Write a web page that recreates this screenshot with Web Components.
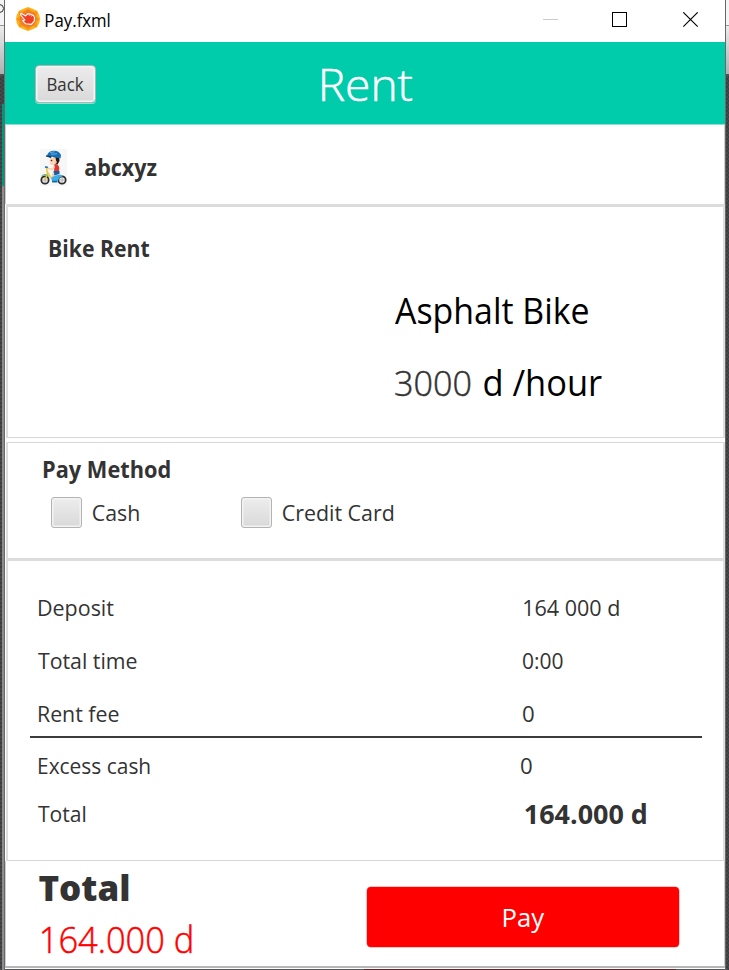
<!DOCTYPE html>
<html lang="en">
<head>
<meta charset="utf-8">
<title>Pay.fxml</title>
<style>
html,body{margin:0;height:100%;overflow:hidden;background:#48494a;font-family:"Open Sans","Noto Sans",sans-serif;color:#333}
</style>
</head>
<body>
<pay-page></pay-page>
<script>
const ctx = document.createElement('canvas').getContext('2d');

/* One line of text whose inked width is given by the "w" attribute. */
class FitText extends HTMLElement {
  connectedCallback() {
    const root = this.attachShadow({ mode: 'open' });
    const s = +this.getAttribute('size') || 22, wt = this.getAttribute('weight') || 400, w = +this.getAttribute('w');
    ctx.font = `${wt} ${s * 10}px "Open Sans"`;
    const m = ctx.measureText(this.textContent.trim());
    const left = m.actualBoundingBoxLeft / 10;
    const k = w / (left + m.actualBoundingBoxRight / 10);
    root.innerHTML = `<style>
      :host{display:block;flex:none;width:${w}px;height:${s}px;font-size:${s}px;font-weight:${wt};line-height:${s}px;white-space:nowrap;${wt == 300 ? '-webkit-text-stroke:.5px currentColor' : ''}}
      span{display:block;width:max-content;transform-origin:0 0;transform:translateX(${left * k}px) scaleX(${k})}
    </style><span><slot></slot></span>`;
  }
}
customElements.define('fit-text', FitText);

function define(name, html) {
  customElements.define(name, class extends HTMLElement {
    constructor() { super(); this.attachShadow({ mode: 'open' }).innerHTML = html; }
  });
}

define('app-icon', `<style>:host{display:block;width:24px;height:24px;flex:none}svg{display:block}</style>
<svg width="24" height="24" viewBox="0 0 24 24">
<path d="M12 0L16 1.6 21 3.7 23.3 8 24 12 23.3 16 21 20.3 16 22.4 12 24 8 22.4 3 20.3.7 16 0 12 .7 8 3 3.7 8 1.6Z" fill="#fbb517"/>
<path d="M12 1.2L17 4.5H21.5L20.5 9.5 23.5 12 20.5 15 21 19.5 16.5 19.5 12 23 7.5 19.5H3L3.5 15 .5 12 3.5 9.5 2.7 4.5H7Z" fill="#f69320"/>
<path d="M12 3L19 6.5 20.5 12 18 18 12 20.5 6 18 3.5 12 5 6.5Z" fill="#f47a24"/>
<path d="M5 6.3L9.600 9 11.500 6.800 12.800 6.700 14 7.300 15.200 7.200 16.300 8.200 17.400 8.400 18.500 10.500 18.200 14.200 15.300 17.400 9.800 16.800 6.600 13.700 8.900 13 4.600 8Z" fill="#ef3e24" stroke="#fff" stroke-width="1.100" stroke-linejoin="round"/>
<path d="M12.500 7L13.500 9M14.600 7.600L15.500 9.600" stroke="#fff" stroke-width=".5"/>
</svg>`);

define('window-buttons', `<style>:host{display:block;flex:none;width:156px;height:16px}svg{display:block}</style>
<svg width="156" height="16" viewBox="0 0 156 16" fill="none" shape-rendering="crispEdges">
<path d="M0 7.5H15" stroke="#ccc"/><rect x="69.500" y=".5" width="14" height="14" stroke="#000"/>
<path d="M140.300 .300L154.700 14.700M154.700 .300L140.300 14.700" stroke="#000" stroke-width="1.100" shape-rendering="auto"/></svg>`);

define('title-bar', `<style>:host{display:flex;height:42px;background:#fff;color:#000;box-sizing:border-box;padding:7px 26px 0 11px}
fit-text{margin:4.500px 0 0 6px}window-buttons{margin:5px 0 0 auto}</style>
<app-icon></app-icon><fit-text w="63.500" size="17.500">Pay.fxml</fit-text><window-buttons></window-buttons>`);

define('back-button', `<style>:host{display:flex;width:61px;height:38px;box-sizing:border-box;border:1.500px solid #aab6b2;border-radius:4px;padding:8.500px 0 0 12px;
background:linear-gradient(#ececec,#d9d9d9);box-shadow:inset 0 0 0 1.500px #f4f4f4,0 1px 0 #8ce4d2}</style><slot></slot>`);

define('rent-header', `<style>:host{display:flex;height:82px;background:#00cbaa;border-bottom:1px solid #8ce0d0;box-sizing:content-box}
back-button{margin:23px 0 0 30px}.title{color:#fff;margin:19px 0 0 226px}</style>
<back-button><fit-text w="35.500" size="18">Back</fit-text></back-button><fit-text class="title" w="90" size="45" weight="300">Rent</fit-text>`);

define('kid-avatar', `<style>:host{display:block;width:27px;height:37px;flex:none;background:#f7f7f7}svg{display:block}</style>
<svg width="27" height="37" viewBox="0 0 27 37">
<path d="M13 9Q20 6 19.500 12L17.500 15.500H14Z" fill="#2a1712"/>
<path d="M10 8.500H15.500L16.500 14 14 16H11.500Q9.500 15 9.700 12Z" fill="#fbd3b5"/><circle cx="11.500" cy="11.500" r=".8" fill="#43251b"/>
<path d="M15.500 11.500a1.200 1.500 0 0 1 0 3" fill="#f2b48e"/>
<path d="M7 6.500Q8 2.500 13 1.700 19 1.200 21 6L20.500 9.500 15.500 8.600 12 7.700 10 9Z" fill="#176fb8"/>
<path d="M10 3.800L14.500 2.800M11 5.200L17 4.700" stroke="#67aede" stroke-width="1.100"/><path d="M6 6.800L11 8" stroke="#173452" stroke-width="1.300"/>
<path d="M14.500 15.500Q18.500 14.500 19.300 19L19 22.500H14Z" fill="#e6332c"/>
<path d="M14.500 17.500L12 20.500 8 19.300" fill="none" stroke="#fad0ae" stroke-width="1.800"/>
<path d="M13.500 22H19.500V25L14 26.500Z" fill="#175da3"/><path d="M13.500 24L12 29" stroke="#fad0ae" stroke-width="2"/>
<g fill="#e9e9e9" stroke="#262626" stroke-width="1.700"><circle cx="5" cy="31" r="3.700"/><circle cx="22" cy="31" r="3.700"/></g>
<g fill="none" stroke="#888" stroke-width=".5"><path d="M1.500 31H8.500M5 27.500V34.500M18.500 31H25.500M22 27.500V34.500"/></g>
<path d="M5 31L7.500 25 6.500 18.500M7 22L11 29" fill="none" stroke="#edc730" stroke-width="1.500"/>
<path d="M5 17.800L8 18.500" stroke="#2377b5" stroke-width="1.700"/><path d="M1.500 27Q5 23.500 9 27.500" fill="none" stroke="#68b67c" stroke-width="1"/>
<path d="M11 29Q14 26 20 25.500L23 27 19 29 17.500 33.500H12.500Z" fill="#3eaee5"/><path d="M12 32.500H17" stroke="#1466a9" stroke-width="1.500"/>
</svg>`);

define('user-bar', `<style>:host{display:flex;height:79px;background:#fff;border-left:1px solid #ccc;border-right:1px solid #ccc;}
kid-avatar{margin:24px 0 0 34px}::slotted(fit-text){margin:32px 0 0 18px}</style>
<kid-avatar></kid-avatar><slot></slot>`);

define('bike-panel', `<style>:host{display:block;height:230px;box-sizing:content-box;background:#fff;border:2px solid #dedede;border-top:3px solid #dcdcdc;border-bottom:1px solid #d8d8d8;margin-left:1px}
h2{margin:0;padding:31px 0 0 41.500px}.detail{padding:32px 0 0 386.500px;color:#000}.price{display:flex;padding-top:36px;gap:13.500px}.num{color:#333;margin-left:.5px}</style>
<h2><fit-text w="99" size="22.500" weight="700">Bike Rent</fit-text></h2>
<div class="detail"><fit-text w="193" size="36">Asphalt Bike</fit-text><div class="price"><fit-text class="num" w="75" size="35.500" weight="300">3000</fit-text><fit-text w="118" size="36">d /hour</fit-text></div></div>`);

define('check-option', `<style>:host{display:flex;width:190.500px}i{width:29px;height:29px;border:1px solid #b3b3b3;border-radius:3px;background:linear-gradient(#ededed,#d9d9d9);box-shadow:inset 0 0 0 1.500px #f3f3f3;box-sizing:content-box;margin-right:11px}
::slotted(fit-text){margin-top:4px}</style><i></i><slot></slot>`);

define('method-panel', `<style>:host{display:block;height:115px;margin:4px 0 0 1px;background:#fff;border:2px solid #dedede;border-top:1px solid #d8d8d8;border-bottom:3px solid #dcdcdc}
h2{margin:0;padding:16px 0 0 35.500px}.opts{display:flex;padding:15.500px 0 0 42.500px}</style>
<h2><fit-text w="125.500" size="22.500" weight="700">Pay Method</fit-text></h2>
<div class="opts"><check-option><fit-text w="45.500" size="22">Cash</fit-text></check-option><check-option><fit-text w="110" size="22">Credit Card</fit-text></check-option></div>`);

define('fee-row', `<style>:host{display:grid;grid-template-columns:484px 1fr;height:22px;padding-left:30.500px}</style><slot></slot>`);

define('fee-panel', `<style>:host{display:flex;flex-direction:column;height:299px;margin-left:1px;background:#fff;border:2px solid #dedede;border-top:0;border-bottom:1px solid #d8d8d8}
.top{display:grid;gap:31px;padding-top:35px}.line{height:2px;background:#3c3c3f;margin:12px 21px 0 22px}.bottom{display:grid;gap:26px;padding-top:16px}.sum{margin:-1.500px 0 0 2px}.ex{margin-left:-1.500px}.dep{margin-left:1.500px}.t{margin-left:-1px}</style>
<div class="top"><fee-row><fit-text w="74.500">Deposit</fit-text><fit-text class="dep" w="94.500">164 000 d</fit-text></fee-row>
<fee-row><fit-text class="t" w="98.500">Total time</fit-text><fit-text w="39.500">0:00</fit-text></fee-row>
<fee-row><fit-text w="79.500">Rent fee</fit-text><fit-text w="10.500">0</fit-text></fee-row></div>
<div class="line"></div>
<div class="bottom"><fee-row><fit-text w="110.500">Excess cash</fit-text><fit-text class="ex" w="10.500">0</fit-text></fee-row>
<fee-row><fit-text class="t" w="47">Total</fit-text><fit-text class="sum" w="121" size="26" weight="700">164.000 d</fit-text></fee-row></div>`);

define('pay-button', `<style>:host{display:flex;width:312px;height:60px;background:#f00;border-radius:4px;color:#fff;box-shadow:0 0 0 .5px #ff8c8c;box-sizing:border-box;padding:17px 0 0 137px}</style><fit-text w="40.500" size="26">Pay</fit-text>`);

define('pay-footer', `<style>:host{display:flex;height:105px;background:#fff;border:1px solid #ccc;border-top:0;border-bottom:2px solid #b6b6b8;box-sizing:content-box}
.sum{width:327.500px;padding:9px 0 0 33px;box-sizing:content-box}.amt{color:#f00;margin:16.500px 0 0 2.500px}pay-button{margin-top:26px}</style>
<div class="sum"><fit-text w="89.500" size="35" weight="800">Total</fit-text><fit-text class="amt" w="149.500" size="36" weight="300">164.000 d</fit-text></div><pay-button></pay-button>`);

define('back-edge', `<style>:host{display:block;overflow:hidden;height:970px;background:linear-gradient(#f4f4f4 25px,#999 25px,#999 26px,#ececec 26px,#b0b0b0 74px,#505050 74px,#505050 76px,transparent 76px),repeating-conic-gradient(#3b3d3e 0 25%,#48494a 0 50%) 0 0/4px 4px}</style><slot></slot>`);

define('pay-page', `<style>:host{display:grid;grid-template-columns:5px 720px 4px;height:970px}
main{background:#fff;height:969px}
.under{height:1px;background:linear-gradient(90deg,#56565a 359px,#6d1c22 359px,#6d1c22 671px,#56565a 671px)}
.l{border-right:1px solid #686868}.r{border-left:1px solid #686868}
.top{height:13px;display:flow-root}
.arc{width:9px;height:9px;box-sizing:border-box;border:1.500px solid #333;border-radius:50%;margin:4px 0 0 -5px}
.teal{height:82px;width:2px;margin:91px 0 0 2px;background:#00967f}.grey{height:784px;width:2px;margin-left:2px;background:#8c8c8e}</style>
<back-edge class="l"><div class="top"><div class="arc"></div></div><div class="teal"></div><div class="grey"></div></back-edge>
<div><main><title-bar></title-bar><rent-header></rent-header><user-bar><fit-text w="71.500" size="22.500" weight="700">abcxyz</fit-text></user-bar><bike-panel></bike-panel><method-panel></method-panel><fee-panel></fee-panel><pay-footer></pay-footer></main><div class="under"></div></div>
<back-edge class="r"></back-edge>`);
</script>
</body>
</html>
